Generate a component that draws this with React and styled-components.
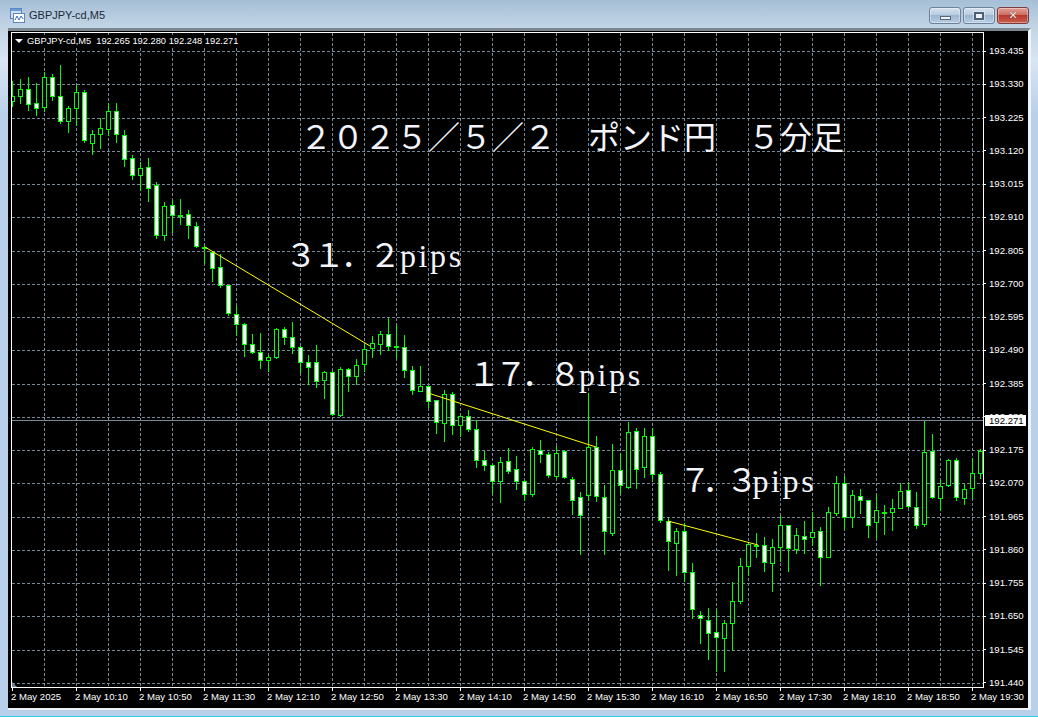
import React from 'react'
import styled, { createGlobalStyle } from 'styled-components'

const GlobalStyle = createGlobalStyle`
  html, body {
    margin: 0;
    padding: 0;
    background: #bcd2e8;
  }
`

// high, body top, body bottom, low, white body (pixel rows of the chart)
const candles = [
  [81,96,101,106,0],[79,89,96,103,0],[77,89,104,110,1],[83,103,108,115,1],[72,77,107,111,0],
  [74,77,96,100,1],[65,96,121,123,1],[106,108,121,132,0],[85,92,108,125,0],[90,92,140,142,1],
  [130,134,143,154,0],[118,128,134,148,0],[103,111,129,135,0],[103,111,134,142,1],[130,135,159,166,1],
  [155,158,175,179,1],[162,168,175,190,0],[158,167,188,201,1],[182,185,235,238,1],[202,206,235,240,0],
  [200,205,215,232,1],[199,215,215,224,1],[210,214,225,238,1],[222,226,246,247,1],[245,247,247,263,1],
  [252,252,268,281,1],[254,267,285,287,1],[285,285,313,315,1],[306,314,324,335,1],[323,324,344,356,1],
  [334,344,352,353,1],[333,352,360,368,1],[355,357,360,371,0],[328,329,357,358,0],[327,329,337,344,1],
  [322,337,347,353,1],[346,347,362,372,1],[355,362,367,384,1],[345,362,381,387,1],[371,372,380,398,0],
  [371,372,414,415,1],[367,369,415,416,0],[368,369,376,391,1],[359,365,376,384,0],[344,349,364,371,0],
  [336,343,348,357,0],[331,334,344,354,0],[318,334,346,350,1],[325,346,346,358,1],[335,347,370,377,1],
  [366,370,390,394,1],[366,386,391,391,0],[385,386,401,407,1],[400,400,422,433,1],[390,394,423,441,0],
  [392,394,425,434,1],[414,416,425,436,0],[410,416,429,431,1],[420,429,460,467,1],[451,460,465,470,1],
  [464,465,481,493,1],[457,462,481,502,0],[448,461,471,473,1],[456,469,481,489,1],[480,481,494,500,1],
  [447,449,494,496,0],[440,450,454,462,1],[452,454,475,477,1],[446,453,476,478,0],[450,451,477,478,1],
  [477,479,500,514,1],[492,497,515,554,1],[393,447,495,500,0],[436,447,496,501,1],[485,497,531,554,1],
  [444,470,533,535,0],[453,470,485,493,1],[422,432,487,488,0],[428,431,469,488,1],[428,436,467,477,0],
  [428,436,474,481,1],[472,474,520,522,1],[518,521,541,570,1],[528,531,543,575,0],[523,531,572,581,1],
  [563,572,609,618,1],[611,615,618,643,1],[608,620,633,659,1],[609,632,637,671,1],[620,623,638,671,0],
  [582,601,623,650,0],[558,566,601,603,0],[542,544,566,575,0],[533,545,545,557,1],[537,545,562,571,1],
  [539,547,563,591,0],[516,525,547,561,0],[525,525,548,571,1],[528,535,549,553,0],[521,536,539,553,1],
  [512,532,537,545,0],[527,531,557,585,1],[507,512,557,557,0],[476,483,513,515,0],[476,483,517,529,1],
  [490,495,517,527,0],[489,496,500,513,1],[500,500,525,537,1],[494,510,522,538,0],[505,512,512,534,1],
  [499,508,512,530,0],[483,491,508,508,0],[482,490,506,507,1],[492,507,525,528,1],[421,452,524,526,0],
  [434,451,497,498,1],[480,486,498,510,0],[459,460,485,486,0],[458,460,497,500,1],[484,489,498,504,0],
  [458,473,488,498,0],[449,451,473,478,0],
]

const prices = [
  '193.435','193.330','193.225','193.120','193.015','192.910','192.805','192.700','192.595','192.490',
  '192.385','192.280','192.175','192.070','191.965','191.860','191.755','191.650','191.545','191.440',
]

const times = [
  '2 May 2025','2 May 10:10','2 May 10:50','2 May 11:30','2 May 12:10','2 May 12:50','2 May 13:30','2 May 14:10',
  '2 May 14:50','2 May 15:30','2 May 16:10','2 May 16:50','2 May 17:30','2 May 18:10','2 May 18:50','2 May 19:30',
]

const trendLines = [
  [205, 247, 370, 346],
  [428, 393, 596, 447],
  [668, 521, 758, 545],
]

const gridX = Array.from({ length: 30 }, (_, i) => 44 + i * 32)
const gridY = prices.map((_, i) => Math.round(51 + i * 33.26) + 0.5)

const Candle = ({ index, data }) => {
  const [high, top, bottom, low, white] = data
  const x = 12 + index * 8
  return (
    <g>
      <line x1={x + 0.5} x2={x + 0.5} y1={high} y2={low + 1} stroke="#00ff00" />
      {top === bottom ? (
        <rect x={x - 2} y={top} width={5} height={2} fill="#00ff00" />
      ) : (
        <rect
          x={x - 1.5}
          y={top + 0.5}
          width={4}
          height={bottom - top}
          fill={white ? '#ffffff' : '#000000'}
          stroke="#00ff00"
        />
      )}
    </g>
  )
}

const ChartDrawing = () => (
  <ChartSvg viewBox="12 33 971 654">
    <g stroke="#778899" strokeDasharray="3 2" shapeRendering="crispEdges">
      {gridX.map((x) => (
        <line key={x} x1={x + 0.5} x2={x + 0.5} y1={33} y2={687} />
      ))}
      {gridY.map((y) => (
        <line key={y} x1={12} x2={983} y1={y} y2={y} />
      ))}
    </g>
    <line x1={12} x2={983} y1={420.5} y2={420.5} stroke="#778899" shapeRendering="crispEdges" />
    <g shapeRendering="crispEdges">
      {candles.map((c, i) => (
        <Candle key={i} index={i} data={c} />
      ))}
    </g>
    <g stroke="#ffff00" strokeWidth="1">
      {trendLines.map(([x1, y1, x2, y2]) => (
        <line key={x1} x1={x1} y1={y1} x2={x2} y2={y2} />
      ))}
    </g>
    <polygon points="12,682 17,687 12,687" fill="#778899" />
  </ChartSvg>
)

const AppIcon = () => (
  <svg width="15" height="15" viewBox="0 0 15 15">
    <rect x="0.5" y="0.5" width="11" height="10" fill="#cfe0f5" stroke="#5c86c4" />
    <rect x="1" y="1" width="10" height="2" fill="#6f9ad6" />
    <rect x="3.5" y="5.5" width="11" height="9" fill="#ffffff" stroke="#5c86c4" />
    <path d="M5 12 L7 8 L9 12 L11 8 L13 11" fill="none" stroke="#3c6fb8" />
  </svg>
)

export default function App() {
  return (
    <>
      <GlobalStyle />
      <Window>
        <TitleBar>
          <AppIcon />
          <Title>GBPJPY-cd,M5</Title>
          <WindowButtons>
            <WinButton>
              <MinGlyph />
            </WinButton>
            <WinButton>
              <MaxGlyph />
            </WinButton>
            <WinButton $close>
              <CloseGlyph>✕</CloseGlyph>
            </WinButton>
          </WindowButtons>
        </TitleBar>
        <ChartPanel>
          <Plot>
            <ChartDrawing />
            <Legend>
              <LegendArrow />
              <span>GBPJPY-cd,M5</span>
              <span>192.265 192.280 192.248 192.271</span>
            </Legend>
            <Note $left={288} $top={83} $spacing={0}>２０２５／５／２　ポンド円　５分足</Note>
            <Note $left={273} $top={201} $spacing={-4}>３１．２<Pips>pips</Pips></Note>
            <Note $left={456} $top={320} $spacing={-5}>１７．８<Pips>pips</Pips></Note>
            <Note $left={667} $top={426} $spacing={-8.5}>７．３<Pips>pips</Pips></Note>
          </Plot>
          <PriceAxis>
            {prices.map((p) => (
              <PriceTick key={p}>{p}</PriceTick>
            ))}
            <CurrentPrice>192.271</CurrentPrice>
          </PriceAxis>
          <TimeAxis>
            {times.map((t) => (
              <TimeTick key={t}>{t}</TimeTick>
            ))}
          </TimeAxis>
        </ChartPanel>
      </Window>
    </>
  )
}

const Window = styled.div`
  width: 1038px;
  height: 717px;
  box-sizing: border-box;
  overflow: hidden;
  display: flex;
  flex-direction: column;
  padding: 0 7px 0 8px;
  border-bottom: 1px solid #29cde8;
  background: linear-gradient(180deg, #a6bfd6 0, #c3d5e6 28px, #d8e5f3 60px, #b9d0ea 115px, #b9d0ea 100%);
  font-family: "Liberation Sans", Arial, sans-serif;
`

const TitleBar = styled.div`
  height: 28px;
  flex: none;
  display: flex;
  align-items: center;
  gap: 4px;
  padding: 2px 0 0 2px;
  box-sizing: border-box;
`

const Title = styled.div`
  font-size: 11px;
  color: #1c2a3c;
`

const WindowButtons = styled.div`
  margin-left: auto;
  margin-right: 2px;
  display: flex;
  align-items: flex-start;
  gap: 2px;
  align-self: flex-start;
  padding-top: 5px;
`

const WinButton = styled.div`
  width: 32px;
  height: 17px;
  box-sizing: border-box;
  display: flex;
  align-items: center;
  justify-content: center;
  border-radius: 3px;
  border: 1px solid ${(p) => (p.$close ? '#7c3b3f' : '#6d8299')};
  background: ${(p) =>
    p.$close
      ? 'linear-gradient(180deg, #e0a197 0, #cf6f62 45%, #b53a2c 50%, #c9604f 100%)'
      : 'linear-gradient(180deg, #d5e2ef 0, #b9cde0 45%, #9db7d0 50%, #b7cee3 100%)'};
  box-shadow: inset 0 0 0 1px rgba(255, 255, 255, 0.35);
`

const MinGlyph = styled.span`
  width: 11px;
  height: 4px;
  margin-top: 5px;
  background: #eef2f6;
  border: 1px solid #56687c;
  box-sizing: border-box;
`

const MaxGlyph = styled.span`
  width: 10px;
  height: 8px;
  background: #eef2f6;
  border: 2px solid #4e6074;
  box-sizing: border-box;
  box-shadow: 0 0 0 1px rgba(255, 255, 255, 0.4);
`

const CloseGlyph = styled.span`
  font-size: 11px;
  line-height: 1;
  font-weight: 700;
  color: #f5eeee;
  font-family: "DejaVu Sans", sans-serif;
  text-shadow: 0 0 1px #4a2226;
`

const ChartPanel = styled.div`
  flex: none;
  width: 1023px;
  height: 682px;
  box-sizing: border-box;
  background: #000;
  border-top: 3px solid #7d8790;
  border-right: 3px solid #eef3f8;
  border-bottom: 2px solid #eef3f8;
  padding: 1px 0 0 3px;
  display: grid;
  grid-template-columns: 973px 1fr;
  grid-template-rows: 656px 1fr;
`

const Plot = styled.div`
  position: relative;
  border: 1px solid #fff;
`

const ChartSvg = styled.svg`
  display: block;
  width: 971px;
  height: 654px;
`

const Legend = styled.div`
  position: absolute;
  left: 3px;
  top: 2px;
  display: flex;
  align-items: center;
  gap: 5px;
  font-size: 9.3px;
  line-height: 12px;
  color: #fff;
  background: #000;
  padding-right: 1px;
`

const LegendArrow = styled.span`
  width: 0;
  height: 0;
  margin-right: -1px;
  border-left: 4px solid transparent;
  border-right: 4px solid transparent;
  border-top: 4px solid #fff;
`

const Note = styled.div`
  position: absolute;
  left: ${(p) => p.$left}px;
  top: ${(p) => p.$top}px;
  font-family: "Noto Sans CJK JP", sans-serif;
  font-weight: 400;
  font-size: 32px;
  line-height: 38px;
  letter-spacing: ${(p) => p.$spacing}px;
  color: #f2f5fb;
  white-space: nowrap;
`

const Pips = styled.span`
  font-family: "Liberation Serif", serif;
  font-weight: 400;
  letter-spacing: 2.6px;
  margin-left: 3px;
`

const PriceAxis = styled.div`
  position: relative;
  display: flex;
  flex-direction: column;
  padding-top: 2px;
`

const PriceTick = styled.div`
  position: relative;
  height: 33.26px;
  flex: none;
  display: flex;
  align-items: center;
  padding-left: 5px;
  font-size: 9.6px;
  color: #fff;

  &::before {
    content: "";
    position: absolute;
    left: 0;
    top: 50%;
    width: 2px;
    height: 1px;
    background: #fff;
  }
`

const CurrentPrice = styled.div`
  position: absolute;
  left: 1px;
  top: 383px;
  width: 41px;
  height: 11px;
  padding-left: 4px;
  box-sizing: border-box;
  background: #fff;
  color: #000;
  font-size: 9.6px;
  line-height: 11px;
`

const TimeAxis = styled.div`
  grid-column: 1 / -1;
  display: flex;
`

const TimeTick = styled.div`
  position: relative;
  width: 64px;
  flex: none;
  box-sizing: border-box;
  padding-top: 3px;
  font-size: 9.6px;
  line-height: 12px;
  color: #fff;
  white-space: nowrap;

  &::before {
    content: "";
    position: absolute;
    left: 1px;
    top: 0;
    width: 1px;
    height: 3px;
    background: #fff;
  }
`
